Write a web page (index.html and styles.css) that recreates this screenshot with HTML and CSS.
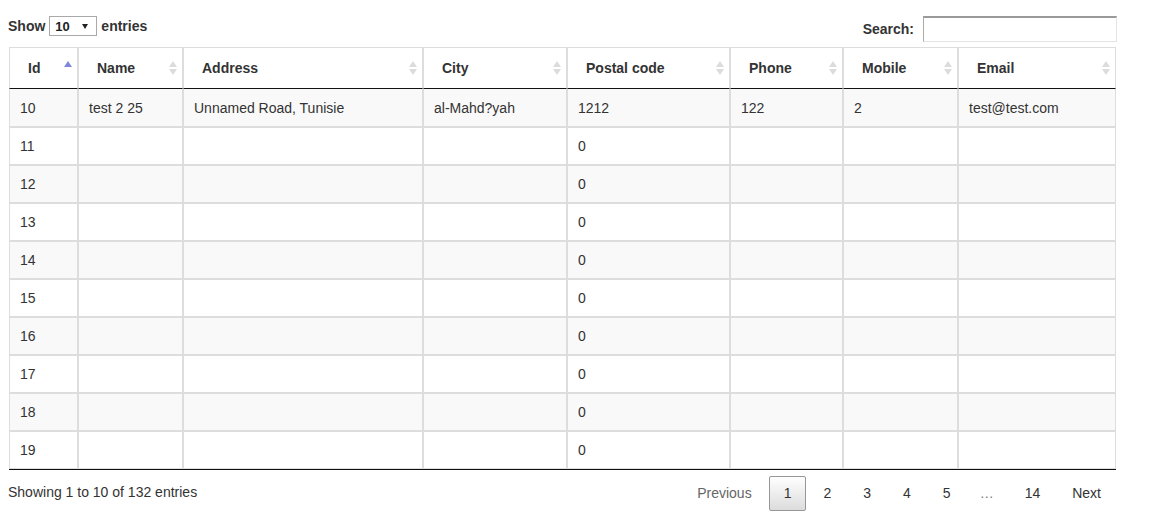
FILE: index.html
```html
<!DOCTYPE html>
<html>
<head>
<meta charset="utf-8">
<title>Entries</title>
<link rel="stylesheet" href="styles.css">
</head>
<body>
<div class="wrapper">
  <div class="topbar">
    <div class="length">
      <span>Show</span>
      <span class="select"><span>10</span><svg width="6" height="5" viewBox="0 0 6 5"><polygon points="0,0 6,0 3,5" fill="#222"/></svg></span>
      <span>entries</span>
    </div>
    <label class="filter"><span>Search:</span><input type="search"></label>
  </div>

  <table class="dt">
    <thead>
      <tr>
        <th class="c1"><div class="th-in"><span>Id</span><svg class="sort" width="8" height="16" viewBox="0 0 8 16"><polygon points="4,1 8,7 0,7" fill="#7f86dd"/></svg></div></th>
        <th class="c2"><div class="th-in"><span>Name</span><svg class="sort" width="8" height="16" viewBox="0 0 8 16"><polygon points="4,1 8,7 0,7" fill="#dcdcdc"/><polygon points="0,9 8,9 4,15" fill="#dcdcdc"/></svg></div></th>
        <th class="c3"><div class="th-in"><span>Address</span><svg class="sort" width="8" height="16" viewBox="0 0 8 16"><polygon points="4,1 8,7 0,7" fill="#dcdcdc"/><polygon points="0,9 8,9 4,15" fill="#dcdcdc"/></svg></div></th>
        <th class="c4"><div class="th-in"><span>City</span><svg class="sort" width="8" height="16" viewBox="0 0 8 16"><polygon points="4,1 8,7 0,7" fill="#dcdcdc"/><polygon points="0,9 8,9 4,15" fill="#dcdcdc"/></svg></div></th>
        <th class="c5"><div class="th-in"><span>Postal code</span><svg class="sort" width="8" height="16" viewBox="0 0 8 16"><polygon points="4,1 8,7 0,7" fill="#dcdcdc"/><polygon points="0,9 8,9 4,15" fill="#dcdcdc"/></svg></div></th>
        <th class="c6"><div class="th-in"><span>Phone</span><svg class="sort" width="8" height="16" viewBox="0 0 8 16"><polygon points="4,1 8,7 0,7" fill="#dcdcdc"/><polygon points="0,9 8,9 4,15" fill="#dcdcdc"/></svg></div></th>
        <th class="c7"><div class="th-in"><span>Mobile</span><svg class="sort" width="8" height="16" viewBox="0 0 8 16"><polygon points="4,1 8,7 0,7" fill="#dcdcdc"/><polygon points="0,9 8,9 4,15" fill="#dcdcdc"/></svg></div></th>
        <th class="c8"><div class="th-in"><span>Email</span><svg class="sort" width="8" height="16" viewBox="0 0 8 16"><polygon points="4,1 8,7 0,7" fill="#dcdcdc"/><polygon points="0,9 8,9 4,15" fill="#dcdcdc"/></svg></div></th>
      </tr>
    </thead>
    <tbody>
      <tr class="odd"><td>10</td><td>test 2 25</td><td>Unnamed Road, Tunisie</td><td>al-Mahd?yah</td><td>1212</td><td>122</td><td>2</td><td>test@test.com</td></tr>
      <tr><td>11</td><td></td><td></td><td></td><td>0</td><td></td><td></td><td></td></tr>
      <tr class="odd"><td>12</td><td></td><td></td><td></td><td>0</td><td></td><td></td><td></td></tr>
      <tr><td>13</td><td></td><td></td><td></td><td>0</td><td></td><td></td><td></td></tr>
      <tr class="odd"><td>14</td><td></td><td></td><td></td><td>0</td><td></td><td></td><td></td></tr>
      <tr><td>15</td><td></td><td></td><td></td><td>0</td><td></td><td></td><td></td></tr>
      <tr class="odd"><td>16</td><td></td><td></td><td></td><td>0</td><td></td><td></td><td></td></tr>
      <tr><td>17</td><td></td><td></td><td></td><td>0</td><td></td><td></td><td></td></tr>
      <tr class="odd"><td>18</td><td></td><td></td><td></td><td>0</td><td></td><td></td><td></td></tr>
      <tr><td>19</td><td></td><td></td><td></td><td>0</td><td></td><td></td><td></td></tr>
    </tbody>
  </table>

  <div class="footer">
    <div class="info">Showing 1 to 10 of 132 entries</div>
    <div class="paginate">
      <span class="pbtn disabled">Previous</span>
      <span class="pbtn current">1</span>
      <span class="pbtn">2</span>
      <span class="pbtn">3</span>
      <span class="pbtn">4</span>
      <span class="pbtn">5</span>
      <span class="ellipsis">…</span>
      <span class="pbtn">14</span>
      <span class="pbtn">Next</span>
    </div>
  </div>
</div>
</body>
</html>
```

FILE: styles.css
```css
body {
  margin: 8px;
  font-family: "Liberation Sans", Arial, sans-serif;
  font-size: 14px;
  color: #333;
  background: #fff;
}

.wrapper {
  width: 1110px;
  padding-top: 8px;
}

.topbar {
  display: flex;
  justify-content: space-between;
  align-items: flex-start;
  padding-right: 1px;
}

.length {
  display: flex;
  align-items: center;
  gap: 4px;
  height: 20px;
  font-weight: bold;
}

.select {
  box-sizing: border-box;
  width: 48px;
  height: 20px;
  border: 1px solid #a9a9a9;
  display: flex;
  align-items: center;
  justify-content: space-between;
  padding: 0 8px 0 5px;
  font-size: 13px;
  font-weight: bold;
  color: #222;
}

.select svg {
  display: block;
}

.filter {
  display: flex;
  align-items: center;
  gap: 9px;
  font-weight: bold;
}

.filter input {
  box-sizing: border-box;
  width: 194px;
  height: 26px;
  margin: 0;
  padding: 1px 2px;
  border-style: solid;
  border-width: 2px 1px 1px 1px;
  border-color: #9a9a9a #e3e3e3 #e3e3e3 #ababab;
  font: inherit;
  background: #fff;
  outline: none;
}

.dt {
  margin: 5px 0 0 1px;
  width: 1107px;
  border-collapse: separate;
  border-spacing: 0;
  table-layout: fixed;
  border-bottom: 1px solid #111;
}

.dt th {
  box-sizing: border-box;
  padding: 10px 5px 10px 18px;
  border: 1px solid #ddd;
  border-bottom: 1px solid #111;
  text-align: left;
  font-weight: bold;
  line-height: 20px;
  color: #333;
}

.th-in {
  display: flex;
  justify-content: space-between;
  align-items: center;
}

.sort {
  display: block;
  flex: none;
}

.c1 { width: 69px; }
.c2 { width: 105px; }
.c3 { width: 240px; }
.c4 { width: 144px; }
.c5 { width: 163px; }
.c6 { width: 113px; }
.c7 { width: 115px; }
.c8 { width: 158px; }

.dt td {
  padding: 8px 10px;
  line-height: 20px;
  border: 1px solid #ddd;
  color: #333;
  white-space: nowrap;
  overflow: hidden;
}

.dt tbody tr:first-child td {
  border-top: none;
  padding-top: 9px;
}

.dt tbody tr.odd td {
  background: #f9f9f9;
}

.footer {
  display: flex;
  justify-content: space-between;
  align-items: flex-start;
}

.info {
  padding-top: 13px;
  line-height: 18px;
}

.paginate {
  display: flex;
  margin-top: 6px;
  margin-right: 2px;
}

.pbtn {
  padding: 8px 14px;
  line-height: 17px;
  border: 1px solid transparent;
  border-radius: 2px;
  margin-left: 2px;
  color: #333;
}

.pbtn.disabled {
  color: #666;
}

.pbtn.current {
  border-color: #979797;
  background: linear-gradient(to bottom, #fff 0%, #dcdcdc 100%);
}

.ellipsis {
  padding: 0 14px;
  line-height: 35px;
  color: #777;
}
```
